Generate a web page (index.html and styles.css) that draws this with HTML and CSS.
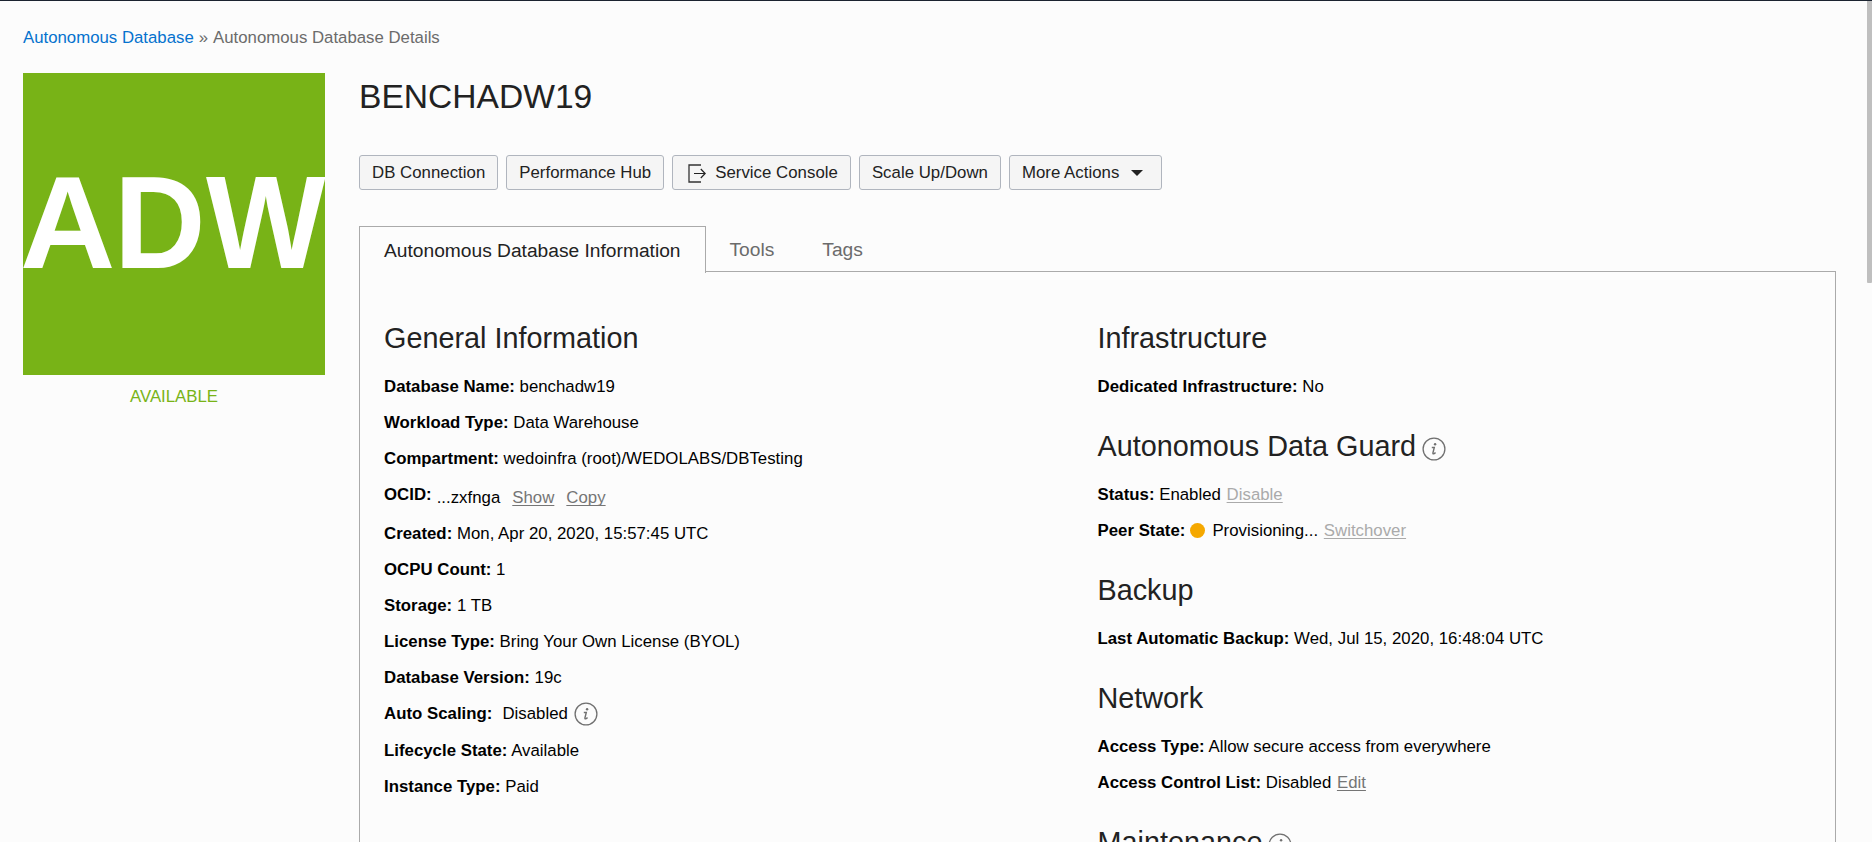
FILE: index.html
```html
<!DOCTYPE html>
<html lang="en">
<head>
<meta charset="utf-8">
<title>Autonomous Database Details</title>
<link rel="stylesheet" href="styles.css">
</head>
<body>
<svg class="defs" aria-hidden="true">
  <symbol id="info" viewBox="0 0 24 24">
    <circle cx="12" cy="12" r="10.9" fill="none" stroke="currentColor" stroke-width="1.3"/>
    <circle cx="13.1" cy="7.2" r="1.2" fill="currentColor"/>
    <path d="M9.8 10.5h2.5L10.9 16q-.2 1.1.8.8 1-.3 1.8-1.3" fill="none" stroke="currentColor" stroke-width="1.4"/>
  </symbol>
</svg>
<nav class="breadcrumb"><a href="#">Autonomous Database</a><span class="sep">»</span>Autonomous Database Details</nav>
<div class="layout">
  <aside class="side">
    <div class="tile">A<span class="narrow">D</span><span class="narrow">W</span></div>
    <div class="state">AVAILABLE</div>
  </aside>
  <main class="main">
    <h1 class="title">BENCHADW19</h1>
    <div class="actions">
      <button class="btn">DB Connection</button>
      <button class="btn">Performance Hub</button>
      <button class="btn"><svg class="exit" viewBox="0 0 18 19"><path d="M13 1H1v17h12" fill="none" stroke="#333" stroke-width="1.3"/><path d="M6 9.5h11M12.8 5l4.4 4.5-4.4 4.5" fill="none" stroke="#222" stroke-width="1.2"/></svg>Service Console</button>
      <button class="btn">Scale Up/Down</button>
      <button class="btn">More Actions<span class="caret"></span></button>
    </div>
    <div class="tabs">
      <div class="tab active">Autonomous Database Information</div>
      <div class="tab">Tools</div>
      <div class="tab">Tags</div>
    </div>
    <div class="panel">
      <section class="col">
        <h2>General Information</h2>
        <p><b>Database Name:</b> benchadw19</p>
        <p><b>Workload Type:</b> Data Warehouse</p>
        <p><b>Compartment:</b> wedoinfra (root)/WEDOLABS/DBTesting</p>
        <p class="ocid"><b>OCID:</b><span class="ocid-value">...zxfnga<a class="link" href="#">Show</a><a class="link" href="#">Copy</a></span></p>
        <p><b>Created:</b> Mon, Apr 20, 2020, 15:57:45 UTC</p>
        <p><b>OCPU Count:</b> 1</p>
        <p><b>Storage:</b> 1 TB</p>
        <p><b>License Type:</b> Bring Your Own License (BYOL)</p>
        <p><b>Database Version:</b> 19c</p>
        <p class="scaling"><b>Auto Scaling:</b><span class="scaling-value">Disabled</span><svg class="info"><use href="#info"/></svg></p>
        <p><b>Lifecycle State:</b> Available</p>
        <p><b>Instance Type:</b> Paid</p>
      </section>
      <section class="col">
        <h2>Infrastructure</h2>
        <p><b>Dedicated Infrastructure:</b> No</p>
        <h2>Autonomous Data Guard<svg class="info"><use href="#info"/></svg></h2>
        <p><b>Status:</b> Enabled <a class="link off">Disable</a></p>
        <p><b>Peer State:</b><span class="dot"></span>Provisioning... <a class="link off">Switchover</a></p>
        <h2>Backup</h2>
        <p><b>Last Automatic Backup:</b> Wed, Jul 15, 2020, 16:48:04 UTC</p>
        <h2>Network</h2>
        <p><b>Access Type:</b> Allow secure access from everywhere</p>
        <p><b>Access Control List:</b> Disabled <a class="link" href="#">Edit</a></p>
        <h2>Maintenance<svg class="info"><use href="#info"/></svg></h2>
      </section>
    </div>
  </main>
</div>
<div class="scroll-thumb"></div>
</body>
</html>
```
FILE: styles.css
```css
* { box-sizing: border-box; }
html { height: 100%; overflow: hidden; }
body {
  margin: 0;
  height: 842px;
  overflow: hidden;
  display: flex;
  flex-direction: column;
  border-top: 1px solid #1b2330;
  background: #fcfcfc;
  color: #000;
  font: 16.8px "Liberation Sans", Arial, sans-serif;
}
.defs { position: absolute; width: 0; height: 0; }
.breadcrumb { flex: none; height: 72px; padding: 18px 0 0 23px; line-height: 37px; color: #6b6b6b; }
.breadcrumb a { color: #0572ce; text-decoration: none; }
.sep { margin: 0 5px; }
.layout { display: flex; gap: 34px; padding: 0 36px 0 23px; flex: none; height: 769px; overflow: hidden; }
.side { width: 302px; flex: none; }
.tile {
  display: flex;
  height: 302px;
  overflow: hidden;
  background: #78b317;
  color: #fff;
  font-size: 132px;
  font-weight: bold;
  letter-spacing: -1px;
  line-height: 299px;
  text-indent: -3px;
  white-space: nowrap;
}
.narrow { margin-right: -3px; text-indent: 0; transform: scaleX(0.96); transform-origin: left; }
.state { margin-top: 3px; line-height: 37px; text-align: center; color: #78b317; }
.main { flex: 1; min-width: 0; }
.title { margin: 0; height: 82px; font-size: 33.6px; font-weight: normal; line-height: 48px; color: #222; }
.actions { display: flex; gap: 8px; }
.btn {
  display: flex;
  align-items: center;
  height: 35px;
  padding: 0 12px;
  border: 1px solid #b0b5be;
  border-radius: 3px;
  background: #f5f5f5;
  color: #222;
  font: inherit;
  letter-spacing: 0.03px;
  white-space: nowrap;
}
.exit { width: 18px; height: 19px; margin: 1px 9px 0 3px; }
.caret { margin: 1px 6px 0 12px; border: 6px solid transparent; border-top-color: #222; border-bottom: 0; }
.tabs { display: flex; height: 47px; margin-top: 36px; margin-bottom: -2px; font-size: 19.2px; line-height: 47px; color: #6b6b6b; }
.tab { padding: 0 24px; }
.tab.active { position: relative; z-index: 1; border: 1px solid #aaa; border-bottom: 0; background: #fcfcfc; color: #222; }
.panel { display: flex; height: 700px; padding: 42px 24px 0; border: 1px solid #aaa; }
.col { flex: 1; }
h2 { display: flex; align-items: center; height: 54px; margin: 0; padding-bottom: 6px; font-size: 28.8px; font-weight: normal; line-height: 48px; color: #222; }
p { margin: 0; height: 36px; line-height: 37px; letter-spacing: 0.02px; white-space: nowrap; }
p + h2 { height: 72px; padding-top: 18px; }
h2 .info { margin: 5px 0 0 6px; }
.info { width: 24px; height: 24px; color: #707070; }
.link { margin-left: 1px; color: #757575; text-decoration: underline 1px; text-underline-offset: 2px; text-decoration-skip-ink: none; }
.link.off { color: #aaa; }
.ocid { display: flex; height: 39px; }
.ocid-value { display: flex; margin: 3px 0 0 5px; }
.ocid-value .link { margin-left: 12px; }
.scaling { display: flex; height: 37px; }
.scaling-value { margin: 0 6px 0 10px; }
.scaling .info { margin-top: 7px; }
.dot { display: inline-block; width: 15px; height: 15px; margin: 0 7px 0 5px; border-radius: 50%; background: #f5a800; vertical-align: -2px; }
.scroll-thumb { position: fixed; top: 1px; right: 0; width: 5px; height: 282px; background: #bfbfbf; border-radius: 0 0 1px 1px; }
```
